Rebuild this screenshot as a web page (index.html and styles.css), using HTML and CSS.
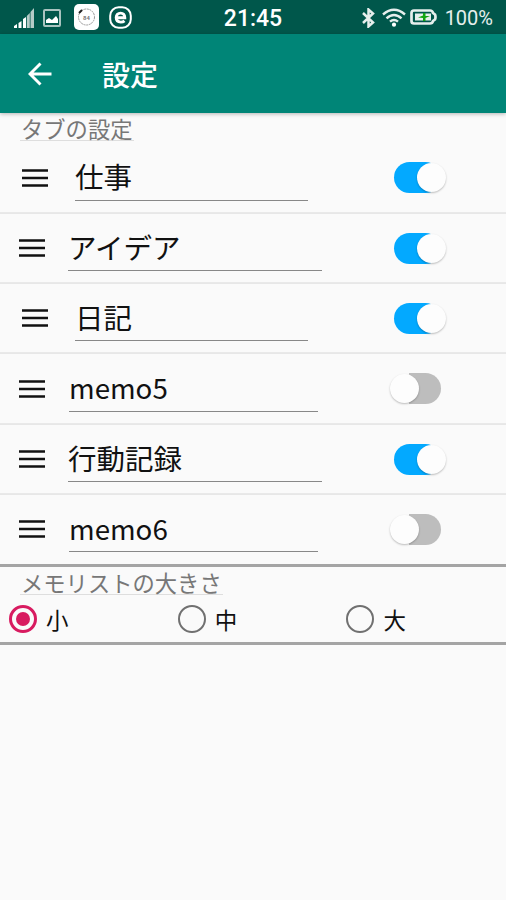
FILE: index.html
```html
<!DOCTYPE html>
<html lang="ja">
<head>
<meta charset="utf-8">
<title>設定</title>
<link rel="stylesheet" href="styles.css">
</head>
<body>
<header class="status">
  <div class="status-left">
    <svg class="signal" width="20" height="20" viewBox="0 0 20 20"><path d="M0 20v-2l3-2v4zM4.500 20v-5l3-2v7zM9 20v-9l3-2v11z" fill="#fff"/><path d="M12.800 20V8l3-3v15zM16.500 20V4L20 0v20z" fill="#b5cbc7"/></svg>
    <svg class="photo" width="18" height="18" viewBox="0 0 18 18"><rect x="1" y="1" width="16" height="16" rx="1" fill="none" stroke="#a9c4c0" stroke-width="2"/><path d="M3 14v-3l3-2 3 2 4-4 2 3v4z" fill="#fff"/></svg>
    <svg class="app" width="25" height="26" viewBox="0 0 25 26"><rect width="25" height="26" rx="5" fill="#fff"/><circle cx="12.500" cy="13" r="8" fill="none" stroke="#999" stroke-width="1" stroke-dasharray="2 .7"/><path d="M5 9l3-3" stroke="#222" stroke-width="2"/><text x="12.500" y="15.500" text-anchor="middle" class="app-text">84</text></svg>
    <svg class="browser" width="23" height="23" viewBox="0 0 23 23"><rect x="1.200" y="1.200" width="20.600" height="20.600" rx="8.500" fill="none" stroke="#fff" stroke-width="2"/><path d="M7.500 11.700h8.300c0-3-1.600-4.600-4.200-4.600s-4.400 1.800-4.400 4.500 1.800 4.500 4.500 4.500c1.700 0 2.800-.4 3.800-1.300" fill="none" stroke="#fff" stroke-width="2.900"/></svg>
  </div>
  <div class="clock">21:45</div>
  <div class="status-right">
    <svg class="bluetooth" width="13" height="20" viewBox="0 0 13 20"><path d="M1 5l10 9.500-4.500 4V1.500L11 5.500 1 15" fill="none" stroke="#e6efed" stroke-width="2.500"/></svg>
    <svg class="wifi" width="24" height="19" viewBox="0 0 24 19"><g fill="none" stroke="#e6efed" stroke-width="2.400"><path d="M1 6.500Q12-3 23 6.500M4.500 10.300Q12 3.500 19.500 10.300M8 13.700q4-3.500 8 0"/></g><circle cx="12" cy="16.700" r="2.100" fill="#fff"/></svg>
    <svg class="battery" width="27" height="16" viewBox="0 0 27 16"><path d="M4 1.500h16q2.500 0 3 2.500l2 1.500q1 2.500 0 5L23 12q-.5 2.500-3 2.500H4q-2.500 0-2.500-2.500V4q0-2.500 2.500-2.500z" fill="none" stroke="#e6efed" stroke-width="2.700"/><path d="M5 4.500h16v7H5z" fill="#e6efed"/><path d="M8 8.500l5-2V4h2.500v3H20l-4.500 2v3H13V9z" fill="#13a513"/></svg>
    <span class="percent">100%</span>
  </div>
</header>
<div class="appbar">
  <svg class="back" width="24" height="24" viewBox="0 0 24 24"><path d="M12.500 1.500L2 12l10.500 10.500M2 12h21.500" fill="none" stroke="#fff" stroke-width="2.900"/></svg>
  <h1>設定</h1>
</div>
<main>
  <section class="tabs">
    <h2>タブの設定</h2>
    <div class="row short"><svg class="handle" viewBox="0 0 26 18"><path d="M0 1.500h26M0 9h26M0 16.500h26"/></svg><div class="field">仕事</div><div class="switch on"><i></i></div></div>
    <div class="row"><svg class="handle" viewBox="0 0 26 18"><path d="M0 1.500h26M0 9h26M0 16.500h26"/></svg><div class="field">アイデア</div><div class="switch on"><i></i></div></div>
    <div class="row short"><svg class="handle" viewBox="0 0 26 18"><path d="M0 1.500h26M0 9h26M0 16.500h26"/></svg><div class="field">日記</div><div class="switch on"><i></i></div></div>
    <div class="row latin"><svg class="handle" viewBox="0 0 26 18"><path d="M0 1.500h26M0 9h26M0 16.500h26"/></svg><div class="field">memo5</div><div class="switch"><i></i></div></div>
    <div class="row"><svg class="handle" viewBox="0 0 26 18"><path d="M0 1.500h26M0 9h26M0 16.500h26"/></svg><div class="field">行動記録</div><div class="switch on"><i></i></div></div>
    <div class="row latin"><svg class="handle" viewBox="0 0 26 18"><path d="M0 1.500h26M0 9h26M0 16.500h26"/></svg><div class="field">memo6</div><div class="switch"><i></i></div></div>
  </section>
  <section class="sizes">
    <h2>メモリストの大きさ</h2>
    <div class="options">
      <div class="option"><span class="radio checked"></span>小</div>
      <div class="option"><span class="radio"></span>中</div>
      <div class="option"><span class="radio"></span>大</div>
    </div>
  </section>
</main>
</body>
</html>
```
FILE: styles.css
```css
* { box-sizing: border-box; }
body {
  margin: 0;
  height: 900px;
  overflow: hidden;
  background: #fafafa;
  color: #111;
  font-family: "Noto Sans CJK JP", sans-serif;
}
svg { display: block; flex: none; }
.status {
  display: grid;
  grid-template-columns: 1fr auto 1fr;
  height: 34px;
  background: #00574b;
  color: #fff;
  font-family: Roboto, sans-serif;
}
.status-left, .status-right { display: flex; align-items: flex-start; }
.status-left { padding-left: 14px; }
.status-right { justify-content: flex-end; padding-right: 13px; }
.signal { margin-top: 8px; }
.photo { margin: 9px 0 0 9px; }
.app { margin: 4px 0 0 13px; }
.app-text { font: bold 6px Roboto, sans-serif; fill: #777; }
.browser { margin: 6px 0 0 10px; }
.clock { font-size: 23px; font-weight: 500; line-height: 37px; }
.bluetooth { margin: 8px 7px 0 0; }
.wifi { margin: 8px 4px 0 0; }
.battery { margin: 9px 8px 0 0; }
.percent { font-size: 20px; line-height: 37px; color: #e6efed; }
.appbar {
  display: flex;
  align-items: center;
  height: 79px;
  padding-left: 28px;
  background: #008577;
  color: #fff;
  box-shadow: 0 1px 4px rgba(0, 0, 0, .28);
}
h1 { margin: 0 0 0 50px; font-size: 28px; line-height: 40px; font-weight: 500; }
h2 {
  width: fit-content;
  height: 24px;
  margin: 0 0 0 20px;
  padding: 0 1px;
  border-bottom: 1px solid #dedede;
  color: #777;
  font-size: 22.3px;
  line-height: 22px;
  font-weight: 400;
}
.tabs { padding-top: 4px; border-bottom: 3px solid #a4a4a4; }
.tabs h2 { margin-top: 0; margin-bottom: 1.300px; }
.row {
  display: grid;
  grid-template-columns: 26px 254px 1fr;
  column-gap: 23px;
  height: 70.340px;
  padding-left: 19px;
  box-shadow: 0 1px #e7e7e7, inset 0 -1px #e9e9e9;
}
.row.short { grid-template-columns: 26px 233px 1fr; column-gap: 27px; padding-left: 22px; }
.row.latin { grid-template-columns: 26px 249px 1fr; column-gap: 24px; }
.row:last-child { height: 70px; box-shadow: none; }
.handle { width: 26px; height: 18px; margin-top: 26.500px; fill: none; stroke: #111; stroke-width: 2.300; }
.field {
  height: 58.500px;
  padding-top: 14px;
  border-bottom: 1.500px solid #888;
  font-size: 28.500px;
  line-height: 40px;
  white-space: nowrap;
}
.latin .field { font-size: 27.700px; }
.switch {
  position: relative;
  justify-self: end;
  width: 47px;
  height: 31px;
  margin: 20px 65px 0 0;
  border-radius: 16px;
  background: linear-gradient(90deg, transparent 15px, #bdbdbd 15px);
}
.switch.on { background: #03a9ff; }
.switch i {
  position: absolute;
  top: 1px;
  left: -4px;
  width: 29px;
  height: 29px;
  border-radius: 50%;
  background: #fdfdfd;
  box-shadow: 0 1px 2px rgba(0, 0, 0, .25);
}
.switch.on i { left: 23px; }
.sizes { height: 78px; padding-top: 4px; border-bottom: 3px solid #a4a4a4; }
.options { display: grid; grid-template-columns: repeat(3, 168.700px); padding: 8.500px 0 0 9px; }
.option { display: flex; align-items: center; gap: 9px; height: 32px; font-size: 22.500px; line-height: 32px; }
.radio {
  display: grid;
  place-items: center;
  width: 28px;
  height: 28px;
  border: 2.500px solid #707070;
  border-radius: 50%;
}
.radio.checked { border: 3px solid #d81b60; }
.radio.checked::after { content: ""; width: 14px; height: 14px; border-radius: 50%; background: #d81b60; }
```
